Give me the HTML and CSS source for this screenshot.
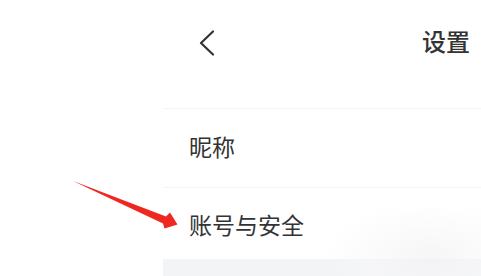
FILE: index.html
```html
<!DOCTYPE html>
<html lang="zh-CN">
<head>
    <meta charset="UTF-8">
    <meta name="viewport" content="width=device-width, initial-scale=1.0">
    <title>设置</title>
    <link rel="stylesheet" href="styles.css">
</head>
<body>
    <div class="screen">
        <div class="gutter"></div>
        <div class="panel">
            <div class="header">
                <svg class="back" width="16" height="26" viewBox="0 0 16 26">
                    <polyline points="14,1.5 2,13 14,24.5" fill="none" stroke="#333" stroke-width="2.2" stroke-linecap="round" stroke-linejoin="round"/>
                </svg>
                <span class="title">设置</span>
            </div>
            <div class="row row-first">昵称</div>
            <div class="row row-second">账号与安全</div>
            <div class="band"></div>
        </div>

        <!-- red pointer arrow over the screenshot -->
        <svg class="pointer" width="481" height="276" viewBox="0 0 481 276">
            <polygon points="73,181 166,216.5 170,212.5 177.5,224.5 164.5,228.5 163,223.5" fill="#ee2720"/>
        </svg>
        <div class="glare"></div>
    </div>
</body>
</html>
```

FILE: styles.css
```css
* {
    box-sizing: border-box;
}

html, body {
    margin: 0;
    padding: 0;
    background: #ffffff;
}

body {
    font-family: "Noto Sans CJK SC", "Noto Sans", sans-serif;
    color: #333333;
    overflow: hidden;
}

.screen {
    position: relative;
    display: flex;
    width: 481px;
    height: 276px;
    overflow: hidden;
}

.gutter {
    width: 163px;
    flex: none;
}

.panel {
    flex: 1;
    display: flex;
    flex-direction: column;
}

.header {
    height: 84px;
    margin-bottom: 24px;
    display: flex;
    align-items: center;
    justify-content: space-between;
    padding: 0 11px 0 36px;
}

.back {
    display: block;
    margin-top: 1px;
}

.title {
    font-size: 24px;
    line-height: 24px;
    font-weight: 500;
    color: #333333;
    margin-top: -2px;
}

.row {
    display: flex;
    align-items: center;
    padding-left: 26px;
    font-size: 23px;
    line-height: 24px;
    color: #333333;
    border-top: 1px solid #f3f3f3;
}

.row-first {
    height: 79px;
    padding-bottom: 4px;
}

.row-second {
    height: 72px;
}

.band {
    height: 17px;
    background: #f3f4f6;
}

.pointer {
    position: absolute;
    left: 0;
    top: 0;
}

.glare {
    position: absolute;
    left: 330px;
    top: 205px;
    width: 180px;
    height: 95px;
    background: radial-gradient(ellipse at 55% 55%, rgba(242, 242, 244, 0.7) 0%, rgba(248, 248, 250, 0.5) 45%, rgba(255, 255, 255, 0) 75%);
}
```
